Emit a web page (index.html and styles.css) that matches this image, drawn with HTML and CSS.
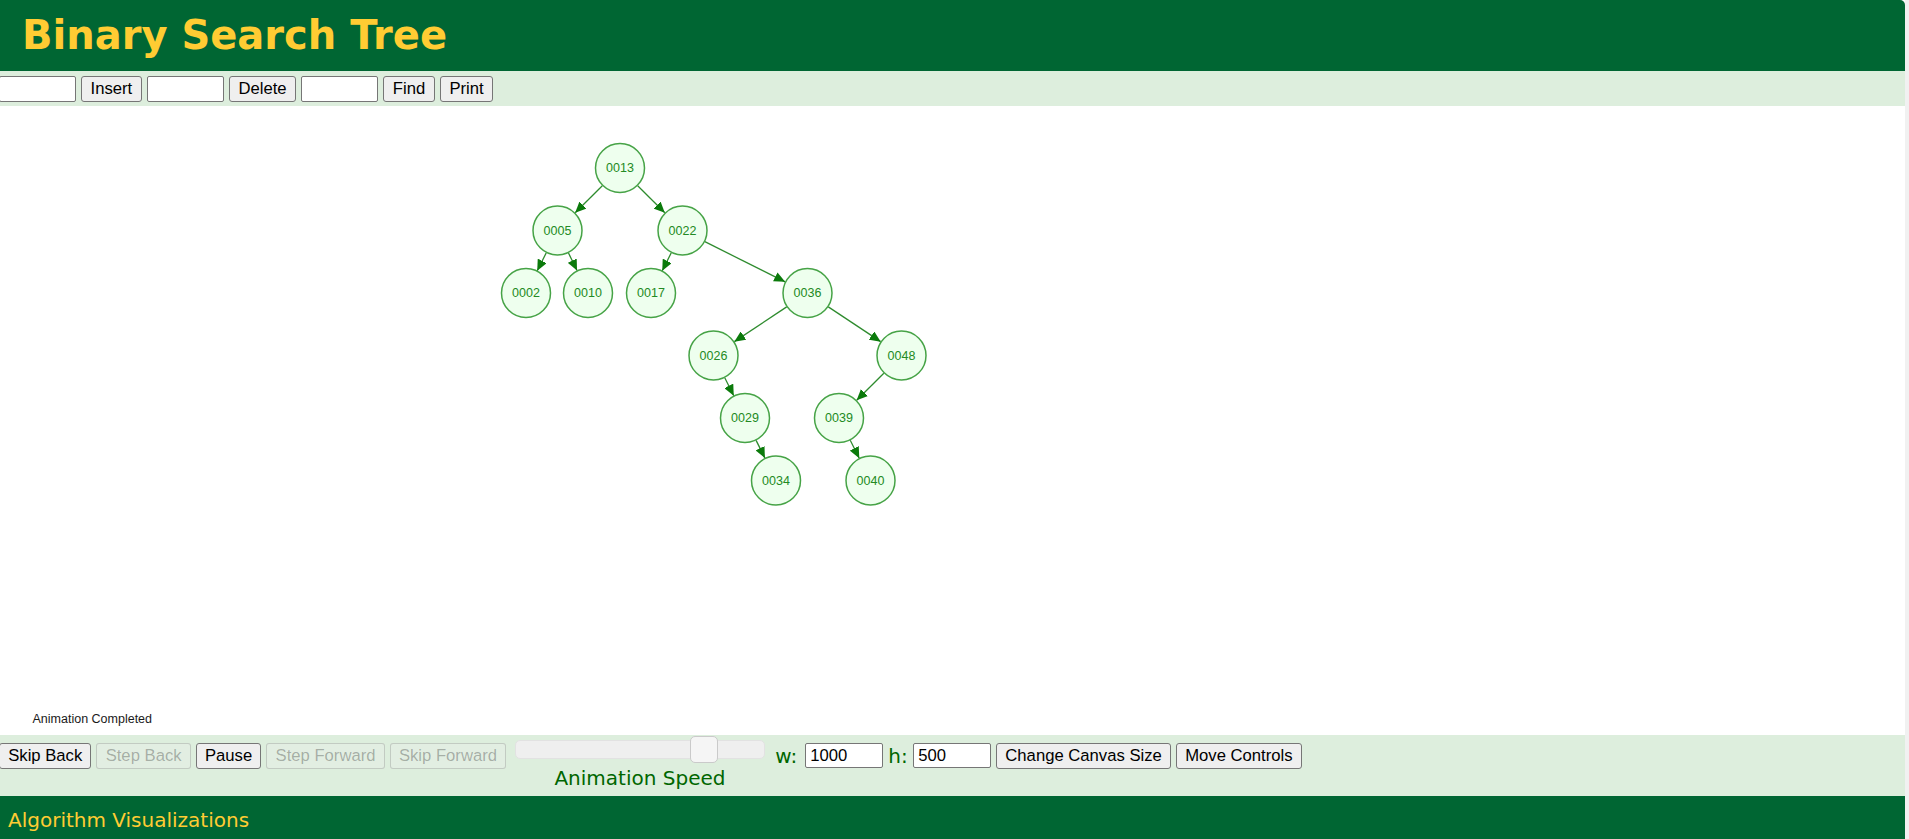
FILE: index.html
```html
<!DOCTYPE html>
<html>
<head>
<meta charset="utf-8">
<title>Binary Search Tree</title>
<link rel="stylesheet" href="styles.css">
</head>
<body>
<div class="page">
  <header class="header"><h1 class="title">Binary Search Tree</h1></header>
  <div class="algo-controls">
    <input class="field field-first" type="text">
    <button class="btn">Insert</button>
    <input class="field" type="text">
    <button class="btn">Delete</button>
    <input class="field" type="text">
    <button class="btn">Find</button>
    <button class="btn">Print</button>
  </div>
  <div class="canvas-area">
    <svg class="tree" width="1905" height="629" viewBox="0 0 1905 629">
      <defs>
        <marker id="arrow" markerUnits="userSpaceOnUse" markerWidth="11" markerHeight="10" viewBox="0 0 11 10" refX="11" refY="5" orient="auto">
          <path d="M0,0 L11,5 L0,10 Z" fill="#0b7a0b"/>
        </marker>
      </defs>
      <g class="edges" stroke="#2e8b2e" stroke-width="1.3" marker-end="url(#arrow)">
        <line x1="602.32" y1="79.68" x2="575.18" y2="106.82"/>
        <line x1="637.68" y1="79.68" x2="664.82" y2="106.82"/>
        <line x1="546.25" y1="146.82" x2="537.25" y2="164.68"/>
        <line x1="568.46" y1="146.97" x2="577.04" y2="164.53"/>
        <line x1="671.25" y1="146.82" x2="662.25" y2="164.68"/>
        <line x1="704.86" y1="135.68" x2="785.14" y2="175.82"/>
        <line x1="786.68" y1="200.84" x2="734.32" y2="235.66"/>
        <line x1="828.32" y1="200.84" x2="880.68" y2="235.66"/>
        <line x1="724.75" y1="271.82" x2="733.75" y2="289.68"/>
        <line x1="756.11" y1="334.40" x2="764.89" y2="352.10"/>
        <line x1="883.82" y1="267.18" x2="856.68" y2="294.32"/>
        <line x1="850.25" y1="334.32" x2="859.25" y2="352.18"/>
      </g>
      <g class="nodes" fill="#eeffee" stroke="#46a346" stroke-width="1.5">
        <circle cx="620" cy="62" r="24.5"/>
        <circle cx="557.5" cy="124.5" r="24.5"/>
        <circle cx="682.5" cy="124.5" r="24.5"/>
        <circle cx="526" cy="187" r="24.5"/>
        <circle cx="588" cy="187" r="24.5"/>
        <circle cx="651" cy="187" r="24.5"/>
        <circle cx="807.5" cy="187" r="24.5"/>
        <circle cx="713.5" cy="249.5" r="24.5"/>
        <circle cx="901.5" cy="249.5" r="24.5"/>
        <circle cx="745" cy="312" r="24.5"/>
        <circle cx="839" cy="312" r="24.5"/>
        <circle cx="776" cy="374.5" r="24.5"/>
        <circle cx="870.5" cy="374.5" r="24.5"/>
      </g>
      <g class="labels" fill="#238a23" text-anchor="middle" dominant-baseline="central">
        <text x="620" y="62">0013</text>
        <text x="557.5" y="124.5">0005</text>
        <text x="682.5" y="124.5">0022</text>
        <text x="526" y="187">0002</text>
        <text x="588" y="187">0010</text>
        <text x="651" y="187">0017</text>
        <text x="807.5" y="187">0036</text>
        <text x="713.5" y="249.5">0026</text>
        <text x="901.5" y="249.5">0048</text>
        <text x="745" y="312">0029</text>
        <text x="839" y="312">0039</text>
        <text x="776" y="374.5">0034</text>
        <text x="870.5" y="374.5">0040</text>
      </g>
      <text class="status" x="32.5" y="616.5">Animation Completed</text>
    </svg>
  </div>
  <div class="anim-controls">
    <button class="btn btn-first">Skip Back</button>
    <button class="btn" disabled>Step Back</button>
    <button class="btn">Pause</button>
    <button class="btn" disabled>Step Forward</button>
    <button class="btn" disabled>Skip Forward</button>
    <div class="speed">
      <input type="range" class="speed-slider" min="0" max="100" value="79">
      <span class="speed-label">Animation Speed</span>
    </div>
    <span class="dim-label">w:</span>
    <input class="field field-dim" type="text" value="1000">
    <span class="dim-label dim-label-h">h:</span>
    <input class="field field-dim" type="text" value="500">
    <button class="btn">Change Canvas Size</button>
    <button class="btn">Move Controls</button>
  </div>
  <footer class="footer">Algorithm Visualizations</footer>
</div>
</body>
</html>
```
FILE: styles.css
```css
html {
  background: #f1f1f1;
}
body {
  margin: 0;
  overflow: hidden;
}
.page {
  width: 1905px;
  height: 839px;
  background: #ffffff;
  overflow: hidden;
}
.header {
  height: 71px;
  box-sizing: border-box;
  padding: 15px 0 0 22px;
  background: #006633;
  border-top-right-radius: 5px;
}
.title {
  margin: 0;
  font: bold 40px/1 "DejaVu Sans", Verdana, sans-serif;
  color: #ffcc33;
}
.algo-controls {
  height: 35px;
  box-sizing: border-box;
  padding-top: 5px;
  display: flex;
  align-items: flex-start;
  gap: 5px;
  background: #ddeedd;
}
.field {
  box-sizing: border-box;
  width: 77px;
  height: 26px;
  margin: 0;
  padding: 0 2px 0 4px;
  border: 1px solid #767676;
  border-radius: 2px;
  background: #ffffff;
  color: #000;
  font: 16.67px "Liberation Sans", Arial, sans-serif;
}
.field-first {
  margin-left: -1px;
}
.btn {
  box-sizing: border-box;
  height: 26px;
  margin: 0;
  padding: 0 8.6px;
  border: 1px solid #767676;
  border-radius: 3px;
  background: #efefef;
  color: #000;
  font: 16.67px "Liberation Sans", Arial, sans-serif;
  white-space: nowrap;
}
.btn:disabled {
  color: rgba(16, 16, 16, 0.3);
  background: rgba(239, 239, 239, 0.3);
  border-color: rgba(118, 118, 118, 0.3);
}
.canvas-area {
  height: 629px;
  background: #ffffff;
}
.tree {
  display: block;
}
.labels {
  font: 12.5px "Liberation Sans", Arial, sans-serif;
}
.status {
  font: 12.5px "Liberation Sans", Arial, sans-serif;
  fill: #1a1a1a;
}
.anim-controls {
  height: 61px;
  box-sizing: border-box;
  padding-top: 8px;
  display: flex;
  align-items: flex-start;
  gap: 5px;
  background: #ddeedd;
}
.anim-controls .btn {
  padding: 0 8.2px;
}
.btn-first {
  margin-left: -1px;
}
.speed {
  margin: -7px 5px 0 3.5px;
  display: flex;
  flex-direction: column;
  align-items: center;
}
.speed-slider {
  -webkit-appearance: none;
  appearance: none;
  width: 250.5px;
  height: 27px;
  margin: 0;
  background: transparent;
}
.speed-slider::-webkit-slider-runnable-track {
  box-sizing: border-box;
  height: 19px;
  background: #efefef;
  border: 1px solid #e2e2e2;
  border-radius: 5px;
}
.speed-slider::-webkit-slider-thumb {
  -webkit-appearance: none;
  appearance: none;
  box-sizing: border-box;
  width: 28px;
  height: 27px;
  margin-top: -5px;
  background: #f5f5f5;
  border: 1px solid #cacaca;
  border-radius: 5px;
}
.speed-label {
  margin-top: 3.5px;
  font: 20px/23px "DejaVu Sans", Verdana, sans-serif;
  color: #006600;
}
.dim-label {
  padding-right: 3px;
  font: 20px/26px "DejaVu Sans", Verdana, sans-serif;
  color: #006600;
}
.dim-label-h {
  padding-right: 0.5px;
}
.field-dim {
  width: 78px;
  height: 25px;
}
.footer {
  height: 43px;
  box-sizing: border-box;
  padding: 13px 0 0 8px;
  background: #006633;
  font: 20px/23px "DejaVu Sans", Verdana, sans-serif;
  color: #ffcc33;
}
```
